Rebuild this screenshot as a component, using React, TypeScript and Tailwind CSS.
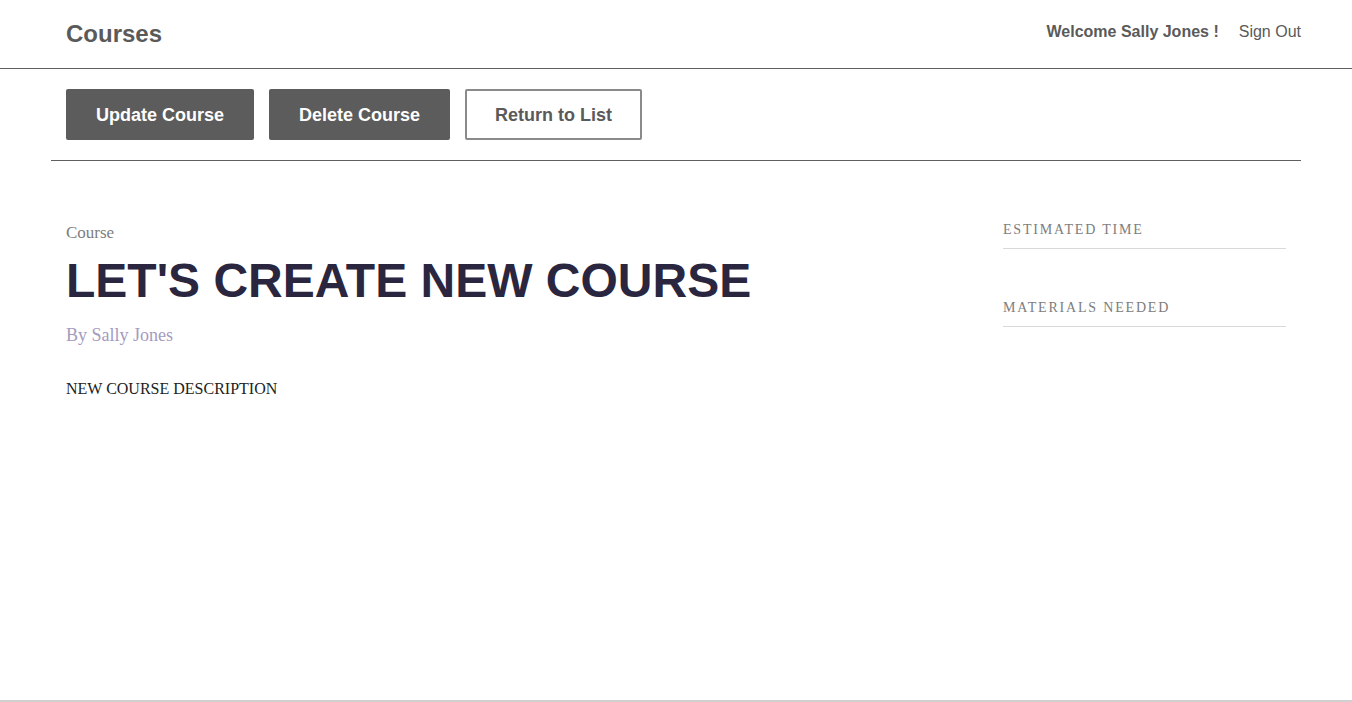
const sans = "font-['Liberation_Sans',Arial,sans-serif]"
const serif = "font-['Liberation_Serif','Times_New_Roman',serif]"

export default function App() {
  return (
    <div className={`min-h-[702px] bg-white flex flex-col ${sans}`}>
      {/* header */}
      <header className="h-[69px] border-b border-[#5f5f5f]">
        <div className="w-[1250px] mx-auto pl-[15px] h-full flex items-center justify-between">
          <h1 className="text-[24px] font-bold text-[#5a5a5a]">Courses</h1>
          <nav className="flex items-center gap-[20px] text-[16px] text-[#5a5a5a] -mt-[4px]">
            <span className="font-bold">Welcome Sally Jones !</span>
            <span>Sign Out</span>
          </nav>
        </div>
      </header>

      {/* actions */}
      <div className="w-[1250px] mx-auto">
        <div className="px-[15px] pt-[20px] pb-[20px] flex gap-[15px] border-b border-[#5f5f5f]">
          <button className="h-[51px] w-[188px] pt-[2px] bg-[#5c5c5c] text-white text-[18px] font-bold rounded-[2px]">Update Course</button>
          <button className="h-[51px] w-[181px] pt-[2px] bg-[#5c5c5c] text-white text-[18px] font-bold rounded-[2px]">Delete Course</button>
          <button className="h-[51px] w-[177px] pt-[2px] bg-white border-2 border-[#8a8a8a] text-[#5a5a5a] text-[18px] font-bold rounded-[2px]">Return to List</button>
        </div>

        {/* details */}
        <div className="pl-[15px] pt-[63px] flex">
          <div className="flex-1">
            <p className={`${serif} text-[17px] text-[#7d7d7d] leading-none`}>Course</p>
            <h2 className="text-[48px] font-bold text-[#2b2640] leading-none mt-[16px]">LET'S CREATE NEW COURSE</h2>
            <p className={`${serif} text-[18px] text-[#a59bbf] leading-none mt-[21px]`}>By Sally Jones</p>
            <p className={`${serif} text-[16px] text-[#222] leading-none mt-[37px]`}>NEW COURSE DESCRIPTION</p>
          </div>
          <aside className="w-[283px] mr-[15px] -mt-[1px]">
            <h4 className={`${serif} text-[14px] tracking-[0.13em] text-[#7d7d7d] pb-[11px] border-b border-[#d9d9d9] leading-none`}>ESTIMATED TIME</h4>
            <h4 className={`${serif} text-[14px] tracking-[0.13em] text-[#7d7d7d] pb-[11px] border-b border-[#d9d9d9] leading-none mt-[52px]`}>MATERIALS NEEDED</h4>
          </aside>
        </div>
      </div>

      <div className="mt-auto border-b-2 border-[#d0d0d0]" />
    </div>
  )
}
